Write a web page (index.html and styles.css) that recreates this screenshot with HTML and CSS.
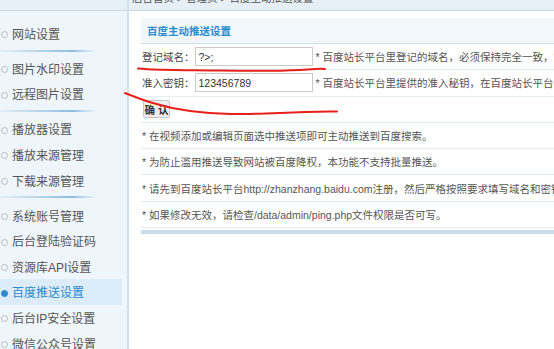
FILE: index.html
```html
<!DOCTYPE html>
<html>
<head>
  <meta charset="UTF-8">
  <title>百度主动推送设置</title>
  <link rel="stylesheet" href="styles.css">
</head>
<body>
  <div class="layout">
    <aside class="sidebar">
      <div class="side-top"></div>
      <ul class="menu">
        <li class="menu-item">网站设置</li>
        <li class="menu-sep"></li>
        <li class="menu-item">图片水印设置</li>
        <li class="menu-item">远程图片设置</li>
        <li class="menu-sep"></li>
        <li class="menu-item">播放器设置</li>
        <li class="menu-item">播放来源管理</li>
        <li class="menu-item">下载来源管理</li>
        <li class="menu-sep"></li>
        <li class="menu-item">系统账号管理</li>
        <li class="menu-item">后台登陆验证码</li>
        <li class="menu-item">资源库API设置</li>
        <li class="menu-item active">百度推送设置</li>
        <li class="menu-item">后台IP安全设置</li>
        <li class="menu-item">微信公众号设置</li>
      </ul>
    </aside>

    <div class="main">
      <div class="crumb"><span>后台首页 &gt; 管理页 &gt; 百度主动推送设置</span></div>

      <div class="panel">
        <div class="panel-title">百度主动推送设置</div>
        <div class="row">
          <label>登记域名：</label>
          <input type="text" class="field" value="?>;">
          <span class="note">* 百度站长平台里登记的域名，必须保持完全一致，如：www.xxx.com</span>
        </div>
        <div class="row">
          <label>准入密钥：</label>
          <input type="text" class="field" value="123456789">
          <span class="note">* 百度站长平台里提供的准入秘钥，在百度站长平台-链接提交-主动推送中获取</span>
        </div>
        <div class="row">
          <button class="btn">确 认</button>
        </div>
        <div class="row">* 在视频添加或编辑页面选中推送项即可主动推送到百度搜索。</div>
        <div class="row">* 为防止滥用推送导致网站被百度降权，本功能不支持批量推送。</div>
        <div class="row">* 请先到百度站长平台http://zhanzhang.baidu.com注册，然后严格按照要求填写域名和密钥。</div>
        <div class="row">* 如果修改无效，请检查/data/admin/ping.php文件权限是否可写。</div>
        <div class="panel-foot"></div>
      </div>
    </div>
  </div>

  <!-- 手绘的红色标注线 -->
  <svg class="marks" width="554" height="349" viewBox="0 0 554 349">
    <path d="M138 68.5 C 160 70.5, 190 70, 220 70.5 S 280 71, 300 70 S 318 68.5, 325 69" />
    <path d="M125 93 C 140 99, 160 107, 190 111 S 240 114.5, 280 113 S 320 111, 337 111.5" />
  </svg>
</body>
</html>
```

FILE: styles.css
```css
* {
  box-sizing: border-box;
}
body {
  margin: 0;
  width: 554px;
  height: 349px;
  overflow: hidden;
  font-family: "Liberation Sans", "Noto Sans CJK SC", sans-serif;
  color: #555;
  background: #fff;
  position: relative;
}
.layout {
  display: flex;
  height: 349px;
}

/* 左侧菜单 */
.sidebar {
  width: 129px;
  flex: none;
  background-color: #eef6fb;
  border-right: 2px solid #cfe1ed;
}
.side-top {
  height: 11px;
  background-color: #e6eff5;
  border-bottom: 1px solid #c6d9e6;
}
.menu {
  list-style: none;
  margin: 0;
  padding: 9.5px 0 0;
  width: 122px;
}
.menu-item {
  position: relative;
  height: 25.6px;
  display: flex;
  align-items: center;
  padding-left: 12px;
  font-size: 12px;
  color: #555;
  white-space: nowrap;
}
.menu-item:before {
  content: "";
  position: absolute;
  left: 1px;
  top: 50%;
  width: 5px;
  height: 5px;
  margin-top: -2px;
  border: 1px solid #b8bec3;
  border-radius: 50%;
}
.menu-item.active {
  background-color: #dcecf8;
  color: #2a8ad0;
}
.menu-item.active:before {
  background-color: #2a8ad0;
  border-color: #2a8ad0;
}
.menu-sep {
  height: 2px;
  width: 95px;
  margin: 3.5px 0 3.9px;
  background: linear-gradient(to right, #e4eff7, #a9cce6 55%, #8dbbe0 75%, #e8f2f9);
}

/* 右侧内容 */
.main {
  flex: 1;
  overflow: hidden;
  white-space: nowrap;
}
.crumb {
  height: 11px;
  overflow: hidden;
  background-color: #e6eff5;
  border-bottom: 1px solid #c6d9e6;
  font-size: 10.5px;
  color: #555;
  padding-left: 3px;
}
.crumb span {
  display: block;
  line-height: 12px;
  margin-top: -8px;
}
.panel {
  width: 760px;
  margin: 7px 0 0 12px;
  font-size: 10.5px;
}
.panel-title {
  height: 26px;
  display: flex;
  align-items: center;
  padding-left: 6px;
  background-color: #f1f7fb;
  border-bottom: 1px solid #cfe2ef;
  color: #2a8ccc;
  font-weight: bold;
}
.row {
  height: 26.3px;
  display: flex;
  align-items: center;
  padding-left: 1px;
  border-bottom: 1px solid #e1edf5;
  color: #555;
}
.row label {
  color: #444;
}
.field {
  width: 118px;
  height: 19px;
  margin: 0;
  padding: 0 3px;
  border: 1px solid #cacaca;
  font-family: inherit;
  font-size: 10.5px;
  color: #333;
  background: #fff;
}
.note {
  margin-left: 3px;
}
.btn {
  width: 27px;
  height: 18px;
  margin: 0 0 0 1px;
  padding: 0;
  border: 1px solid #c6c6c6;
  border-radius: 2px;
  background-color: #eeeeee;
  font-family: inherit;
  font-size: 10.5px;
  font-weight: bold;
  color: #333;
}
.panel-foot {
  height: 4px;
  margin-top: 2px;
  background-color: #c8dbe8;
}

/* 标注线 */
.marks {
  position: absolute;
  left: 0;
  top: 0;
  pointer-events: none;
}
.marks path {
  fill: none;
  stroke: #e8201c;
  stroke-width: 2;
  stroke-linecap: round;
}
```
